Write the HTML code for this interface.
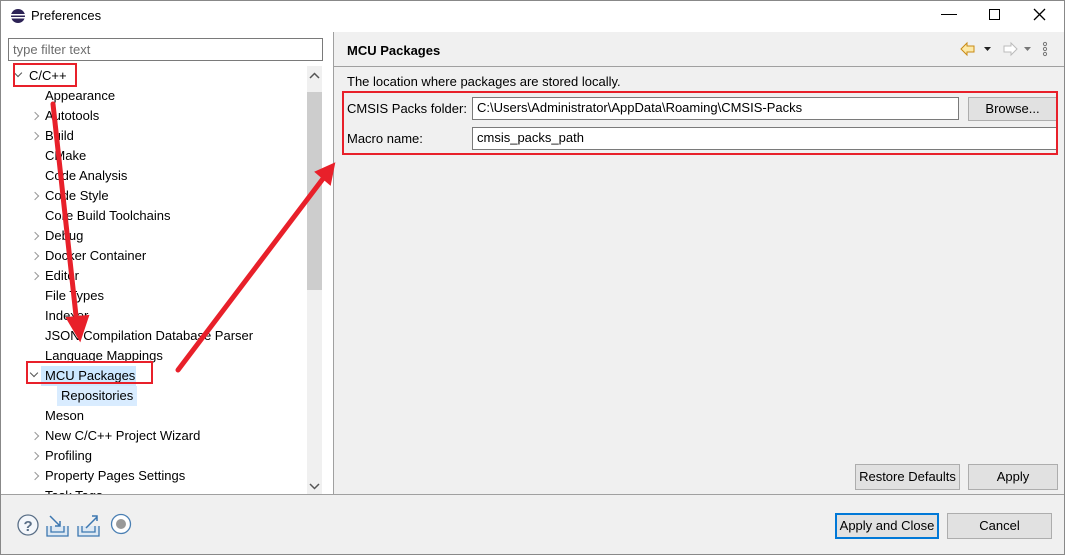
<!DOCTYPE html>
<html><head><meta charset="utf-8"><style>
*{margin:0;padding:0;box-sizing:border-box}
body{width:1065px;height:555px;position:relative;overflow:hidden;font-family:"Liberation Sans","Noto Sans CJK SC",sans-serif;font-size:13px;color:#000;background:#fff}
.a{position:absolute}
.win{left:0;top:0;width:1065px;height:555px;border:1px solid #888}
.t{position:absolute;white-space:nowrap}
.chev{position:absolute;width:6px;height:6px;border-right:1.5px solid #999;border-top:1.5px solid #999;transform:rotate(45deg)}
.dn{position:absolute;width:6px;height:6px;border-right:1.5px solid #555;border-bottom:1.5px solid #555;transform:rotate(45deg)}
.btn{position:absolute;background:#e1e1e1;border:1px solid #adadad;text-align:center;font-size:13px;line-height:22px}
.inp{position:absolute;background:#fff;border:1px solid #7a7a7a;padding-left:4px;line-height:20px;font-size:13px}
</style></head><body>
<div class="a win"></div>
<svg class="a" style="left:10px;top:8px" width="16" height="16"><circle cx="8" cy="8" r="7" fill="#2c2255"/><rect x="1" y="6" width="14" height="1.5" fill="#fff"/><rect x="1" y="9" width="14" height="1.5" fill="#fff"/></svg>
<div class="t" style="left:31px;top:8px">Preferences</div>
<div class="a" style="left:941px;top:14px;width:16px;height:1px;background:#000"></div>
<div class="a" style="left:989px;top:9px;width:11px;height:11px;border:1px solid #000"></div>
<svg class="a" style="left:1033px;top:8px" width="13" height="13"><path d="M1 1L12 12M12 1L1 12" stroke="#000" stroke-width="1.3"/></svg>
<div class="inp" style="left:8px;top:38px;width:315px;height:23px;color:#6d6d6d;line-height:21px">type filter text</div>
<div class="a" style="left:307px;top:66px;width:15px;height:428px;background:#f0f0f0"></div>
<div class="a" style="left:307px;top:92px;width:15px;height:198px;background:#cdcdcd"></div>
<svg class="a" style="left:309px;top:72px" width="11" height="8"><path d="M1 6L5.5 1.5L10 6" stroke="#555" stroke-width="1.5" fill="none"/></svg>
<svg class="a" style="left:309px;top:482px" width="11" height="8"><path d="M1 2L5.5 6.5L10 2" stroke="#555" stroke-width="1.5" fill="none"/></svg>
<div class="a" style="left:333px;top:32px;width:1px;height:462px;background:#a0a0a0"></div>
<div class="a" style="left:41px;top:366px;width:95px;height:20px;background:#cce8ff"></div>
<div class="a" style="left:57px;top:386px;width:80px;height:20px;background:#d9ecff"></div>
<div style="position:absolute;left:0;top:67px;width:306px;height:427px;overflow:hidden">
<div class="dn" style="left:15px;top:3px"></div>
<div class="t" style="left:29px;top:1px">C/C++</div>
<div class="t" style="left:45px;top:21px">Appearance</div>
<div class="chev" style="left:32px;top:46px"></div><div class="t" style="left:45px;top:41px">Autotools</div>
<div class="chev" style="left:32px;top:66px"></div><div class="t" style="left:45px;top:61px">Build</div>
<div class="t" style="left:45px;top:81px">CMake</div>
<div class="t" style="left:45px;top:101px">Code Analysis</div>
<div class="chev" style="left:32px;top:126px"></div><div class="t" style="left:45px;top:121px">Code Style</div>
<div class="t" style="left:45px;top:141px">Core Build Toolchains</div>
<div class="chev" style="left:32px;top:166px"></div><div class="t" style="left:45px;top:161px">Debug</div>
<div class="chev" style="left:32px;top:186px"></div><div class="t" style="left:45px;top:181px">Docker Container</div>
<div class="chev" style="left:32px;top:206px"></div><div class="t" style="left:45px;top:201px">Editor</div>
<div class="t" style="left:45px;top:221px">File Types</div>
<div class="t" style="left:45px;top:241px">Indexer</div>
<div class="t" style="left:45px;top:261px">JSON Compilation Database Parser</div>
<div class="t" style="left:45px;top:281px">Language Mappings</div>
<div class="dn" style="left:31px;top:303px"></div>
<div class="t" style="left:45px;top:301px">MCU Packages</div>
<div class="t" style="left:61px;top:321px">Repositories</div>
<div class="t" style="left:45px;top:341px">Meson</div>
<div class="chev" style="left:32px;top:366px"></div><div class="t" style="left:45px;top:361px">New C/C++ Project Wizard</div>
<div class="chev" style="left:32px;top:386px"></div><div class="t" style="left:45px;top:381px">Profiling</div>
<div class="chev" style="left:32px;top:406px"></div><div class="t" style="left:45px;top:401px">Property Pages Settings</div>
<div class="t" style="left:45px;top:421px">Task Tags</div>
</div>
<div class="a" style="left:334px;top:32px;width:730px;height:462px;background:#f0f0f0"></div>
<div class="a" style="left:334px;top:66px;width:730px;height:1px;background:#a0a0a0"></div>
<div class="t" style="left:347px;top:43px;font-weight:bold">MCU Packages</div>
<svg class="a" style="left:958px;top:40px" width="90" height="18"><path d="M3 9 L9 3 V6 H16 V12 H9 V15 Z" fill="#fde9a8" stroke="#c98a14"/><path d="M26 7 h7 l-3.5 4z" fill="#222"/><path d="M59 9 L53 3 V6 H46 V12 H53 V15 Z" fill="#fff" stroke="#bbb"/><path d="M66 7 h7 l-3.5 4z" fill="#777"/><circle cx="87" cy="4" r="1.6" fill="none" stroke="#777"/><circle cx="87" cy="9" r="1.6" fill="none" stroke="#777"/><circle cx="87" cy="14" r="1.6" fill="none" stroke="#777"/></svg>
<div class="t" style="left:347px;top:74px">The location where packages are stored locally.</div>
<div class="t" style="left:347px;top:101px">CMSIS Packs folder:</div>
<div class="inp" style="left:472px;top:97px;width:487px;height:23px">C:\Users\Administrator\AppData\Roaming\CMSIS-Packs</div>
<div class="btn" style="left:968px;top:97px;width:89px;height:24px">Browse...</div>
<div class="t" style="left:347px;top:131px">Macro name:</div>
<div class="inp" style="left:472px;top:127px;width:586px;height:23px">cmsis_packs_path</div>
<div class="btn" style="left:855px;top:464px;width:105px;height:26px;line-height:24px">Restore Defaults</div>
<div class="btn" style="left:968px;top:464px;width:90px;height:26px;line-height:24px">Apply</div>
<div class="a" style="left:1px;top:494px;width:1063px;height:60px;background:#f0f0f0;border-top:1px solid #a0a0a0"></div>
<svg class="a" style="left:16px;top:512px" width="120" height="26"><circle cx="12" cy="13" r="10" fill="#f4f7fb" stroke="#5a6f87" stroke-width="1.3"/><text x="7.5" y="19" font-size="15" font-family="Liberation Sans" font-weight="bold" fill="#5a6f87">?</text>
<path d="M31 14 v10 h21 v-10 M35 14 v6 h13 v-6" fill="#dde8f3" stroke="#3c77b0" stroke-width="1.3"/><path d="M34 4 l10 10 M44 9 v5 h-5" fill="none" stroke="#3c77b0" stroke-width="1.5"/>
<path d="M62 14 v10 h21 v-10 M66 14 v6 h13 v-6" fill="#dde8f3" stroke="#3c77b0" stroke-width="1.3"/><path d="M70 16 l11 -11 M76 4 h5 v5" fill="none" stroke="#3c77b0" stroke-width="1.5"/>
<circle cx="105" cy="12" r="9.5" fill="#fff" stroke="#4a7fb3" stroke-width="1.3"/><circle cx="105" cy="12" r="5" fill="#999"/></svg>
<div class="btn" style="left:835px;top:513px;width:104px;height:26px;line-height:22px;border:2px solid #0078d7">Apply and Close</div>
<div class="btn" style="left:947px;top:513px;width:105px;height:26px;line-height:24px">Cancel</div>
<div class="a" style="left:13px;top:63px;width:64px;height:24px;border:2px solid #e8202a"></div>
<div class="a" style="left:26px;top:361px;width:127px;height:23px;border:2px solid #e8202a"></div>
<div class="a" style="left:342px;top:91px;width:716px;height:64px;border:2px solid #e8202a"></div>
<svg class="a" style="left:0;top:0" width="1065" height="555"><g stroke="#e8202a" stroke-width="5" stroke-linecap="round" fill="#e8202a">
<line x1="53" y1="104" x2="77" y2="325"/><path d="M67 318 L80 340 L88 316 Z" stroke-width="2"/>
<line x1="178" y1="370" x2="325" y2="176"/><path d="M316 172 L334 164 L330 184 Z" stroke-width="2"/></g></svg>
</body></html>
